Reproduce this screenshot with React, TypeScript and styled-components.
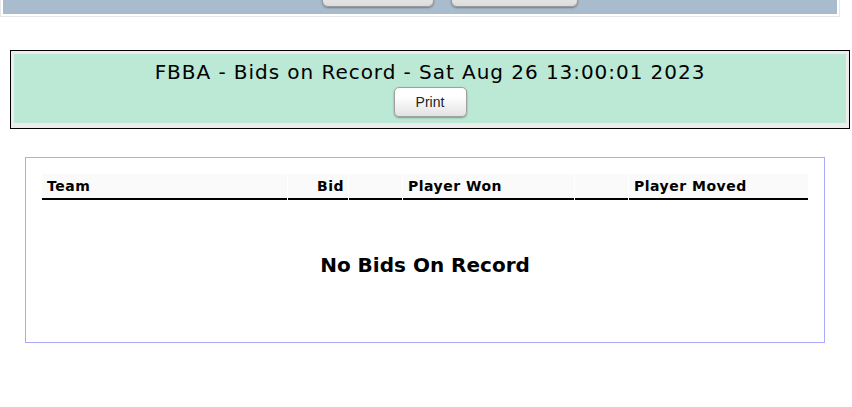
import React from "react";
import styled, { createGlobalStyle } from "styled-components";

const Global = createGlobalStyle`
  html, body { margin: 0; padding: 0; background: #fff; }
  body { font-family: "DejaVu Sans", Verdana, sans-serif; color: #000; }
`;

const Page = styled.div`
  margin-top: -32px;
  display: flex;
  flex-direction: column;
`;

const TopFrame = styled.div`
  width: 834px;
  border: 1px solid #e8e8e8;
  padding: 2px;
`;

const TopPanel = styled.div`
  background: #a9bccd;
  display: flex;
  justify-content: center;
  gap: 17px;
  padding: 6px 0 7px 60px;
`;

const NavButton = styled.button<{ $w: number }>`
  width: ${(p) => p.$w}px;
  height: 30px;
  border: 1px solid #9a9a9a;
  border-radius: 6px;
  background: linear-gradient(#ffffff, #dcdcdc);
  box-shadow: 0 1px 2px rgba(0, 0, 0, 0.35);
`;

const TitleBox = styled.div`
  margin: 33px 0 0 10px;
  width: 832px;
  border: 1px solid #000;
  background: #ececec;
  padding: 3px 3px 5px;
`;

const TitleInner = styled.div`
  background: #bbe9d6;
  display: flex;
  flex-direction: column;
  align-items: center;
  padding: 6px 0 6px;
  gap: 3px;
`;

const Title = styled.div`
  font-size: 20px;
  line-height: 24px;
  letter-spacing: 0.95px;
`;

const PrintButton = styled.button`
  width: 73px;
  height: 30px;
  font-family: "Liberation Sans", Arial, sans-serif;
  font-size: 14px;
  color: #222;
  border: 1px solid #a0a0a0;
  border-radius: 5px;
  background: linear-gradient(#ffffff 30%, #e2e2e2);
  box-shadow: 0 1px 2px rgba(0, 0, 0, 0.35);
  padding: 0;
`;

const TableBox = styled.div`
  box-sizing: border-box;
  margin: 28px 0 0 25px;
  width: 800px;
  height: 186px;
  border: 1px solid #aaaaff;
  padding: 16px 16px 0;
`;

const HeaderRow = styled.div`
  display: grid;
  grid-template-columns: 245px 60px 53px 171px 53px 179px;
  column-gap: 1px;
  width: 766px;
`;

const HeadCell = styled.div<{ $right?: boolean }>`
  background: #fafafa;
  border-bottom: 2px solid #000;
  height: 24px;
  font-size: 14px;
  font-weight: bold;
  letter-spacing: 0.5px;
  line-height: 25px;
  padding: 0 ${(p) => (p.$right ? "4px" : "0")} 0 ${(p) => (p.$right ? "0" : "5px")};
  text-align: ${(p) => (p.$right ? "right" : "left")};
  white-space: nowrap;
`;

const Empty = styled.div`
  margin-top: 53px;
  text-align: center;
  font-size: 20px;
  font-weight: bold;
  line-height: 24px;
`;

export default function App() {
  return (
    <>
      <Global />
      <Page>
        <TopFrame>
          <TopPanel>
            <NavButton $w={112} />
            <NavButton $w={127} />
          </TopPanel>
        </TopFrame>
        <TitleBox>
          <TitleInner>
            <Title>FBBA - Bids on Record - Sat Aug 26 13:00:01 2023</Title>
            <PrintButton>Print</PrintButton>
          </TitleInner>
        </TitleBox>
        <TableBox>
          <HeaderRow>
            <HeadCell>Team</HeadCell>
            <HeadCell $right>Bid</HeadCell>
            <HeadCell />
            <HeadCell>Player Won</HeadCell>
            <HeadCell />
            <HeadCell>Player Moved</HeadCell>
          </HeaderRow>
          <Empty>No Bids On Record</Empty>
        </TableBox>
      </Page>
    </>
  );
}
